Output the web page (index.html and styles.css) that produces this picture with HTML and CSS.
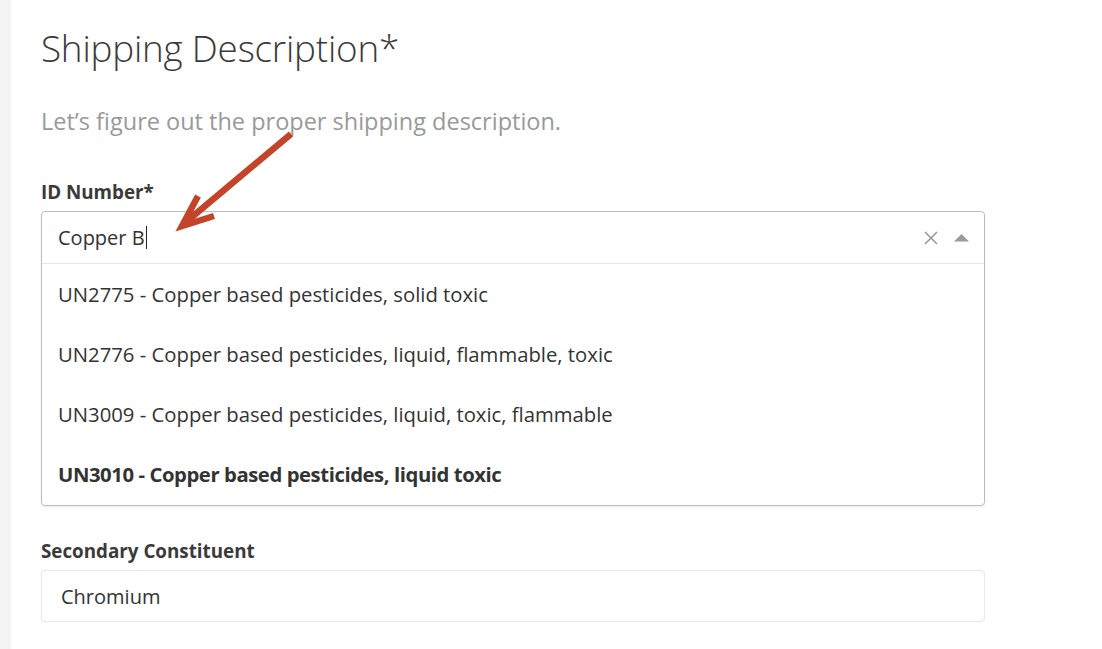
FILE: index.html
```html
<!DOCTYPE html>
<html>
<head>
<meta charset="utf-8">
<link rel="stylesheet" href="styles.css">
</head>
<body>
<div class="page">
  <div class="rail"></div>
  <main class="content">
    <h1 class="title">Shipping Description*</h1>
    <p class="subtitle">Let’s figure out the proper shipping description.</p>

    <div class="field">
      <label class="label">ID Number*</label>
      <div class="select open">
        <div class="control">
          <span class="value">Copper B<span class="caret"></span></span>
          <span class="icons">
            <svg class="clear" width="14" height="14" viewBox="0 0 14 14"><path d="M1 1 L13 13 M13 1 L1 13" stroke="#9a9a9a" stroke-width="1.6" fill="none"/></svg>
            <svg class="toggle" width="15" height="8" viewBox="0 0 15 8"><path d="M0 7.5 L7.5 0 L15 7.5 Z" fill="#9a9a9a"/></svg>
          </span>
        </div>
        <ul class="menu">
          <li class="option">UN2775 - Copper based pesticides, solid toxic</li>
          <li class="option">UN2776 - Copper based pesticides, liquid, flammable, toxic</li>
          <li class="option">UN3009 - Copper based pesticides, liquid, toxic, flammable</li>
          <li class="option active">UN3010 - Copper based pesticides, liquid toxic</li>
        </ul>
      </div>
    </div>

    <div class="field second">
      <label class="label">Secondary Constituent</label>
      <div class="input">Chromium</div>
    </div>
  </main>
  <svg class="arrow" width="1102" height="649" viewBox="0 0 1102 649">
    <path d="M291 134 L186 222" stroke="#c4442b" stroke-width="6.5" fill="none"/>
    <path d="M198 196 L182 226 L214 216" stroke="#c4442b" stroke-width="6.5" fill="none" stroke-linejoin="miter" stroke-miterlimit="10"/>
  </svg>
</div>
</body>
</html>
```

FILE: styles.css
```css
* { box-sizing: border-box; }
html, body { margin: 0; padding: 0; background: #fff; }
body {
  font-family: "Open Sans", "Noto Sans", "Liberation Sans", sans-serif;
  color: #333;
  width: 1102px;
  height: 649px;
  overflow: hidden;
}
.page {
  position: relative;
  display: flex;
  height: 649px;
}
.rail {
  width: 11px;
  flex: none;
  background: #f3f3f3;
}
.content {
  flex: none;
  width: 944px;
  margin-left: 30px;
  padding-top: 24px;
}
.title {
  margin: 0;
  font-size: 36.8px;
  font-weight: 350;
  line-height: 48px;
  color: #3a3a3a;
  letter-spacing: -0.2px;
}
.subtitle {
  margin: 35px 0 0;
  font-size: 23.5px;
  font-weight: 400;
  line-height: 28px;
  color: #999;
}
.field { margin-top: 45px; }
.field.second { margin-top: 33px; }
.label {
  display: block;
  font-size: 18.8px;
  font-weight: 700;
  line-height: 24px;
  color: #3a3a3a;
  margin-bottom: 7px;
}
.select {
  border: 1px solid #bdbdbd;
  border-radius: 4px;
  box-shadow: 0 1px 2px rgba(0,0,0,0.08);
}
.control {
  display: flex;
  align-items: center;
  justify-content: space-between;
  height: 52px;
  padding: 0 15px 0 16px;
  border-bottom: 1px solid #e6e6e6;
}
.value {
  font-size: 20px;
  color: #333;
  display: flex;
  align-items: center;
}
.caret {
  display: inline-block;
  width: 1px;
  height: 23px;
  background: #222;
  margin-left: 1px;
}
.icons {
  display: flex;
  align-items: center;
  gap: 16px;
}
.menu {
  list-style: none;
  margin: 0;
  padding: 0 0 1px;
}
.option {
  height: 60px;
  line-height: 60px;
  padding-left: 16px;
  font-size: 20.3px;
  color: #333;
}
.option.active {
  font-weight: 700;
  letter-spacing: -0.43px;
}
.input {
  height: 52px;
  border: 1px solid #e8e8e8;
  border-radius: 4px;
  display: flex;
  align-items: center;
  padding-left: 19px;
  font-size: 20px;
  color: #333;
}
.arrow {
  position: absolute;
  left: 0;
  top: 0;
  pointer-events: none;
}
```
